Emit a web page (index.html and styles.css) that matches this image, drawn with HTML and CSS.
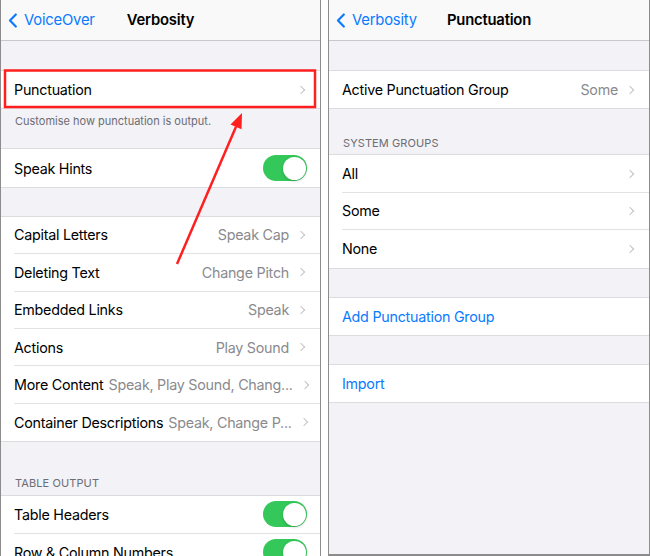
FILE: index.html
```html
<!DOCTYPE html>
<html lang="en">
<head>
  <meta charset="UTF-8">
  <title>Verbosity / Punctuation</title>
  <link rel="stylesheet" href="styles.css">
</head>
<body>

  <div class="screens">

    <div class="phone phone-left">
      <div class="navbar">
        <a class="back" href="#">
          <svg class="back-chevron" viewBox="0 0 10 16"><path d="M8 1.5 1.8 8 8 14.5"/></svg>
          VoiceOver
        </a>
        <span class="title">Verbosity</span>
      </div>

      <div class="spacer spacer-top"></div>
      <div class="group">
        <div class="row"><span class="label">Punctuation</span><span class="value"></span><i class="chev"></i></div>
      </div>
      <p class="footer">Customise how punctuation is output.</p>

      <div class="group">
        <div class="row"><span class="label">Speak Hints</span><span class="switch"></span></div>
      </div>

      <div class="spacer"></div>
      <div class="group">
        <div class="row"><span class="label">Capital Letters</span><span class="value">Speak Cap</span><i class="chev"></i></div>
        <div class="row"><span class="label">Deleting Text</span><span class="value">Change Pitch</span><i class="chev"></i></div>
        <div class="row"><span class="label">Embedded Links</span><span class="value">Speak</span><i class="chev"></i></div>
        <div class="row"><span class="label">Actions</span><span class="value">Play Sound</span><i class="chev"></i></div>
        <div class="row"><span class="label">More Content</span><span class="value">Speak, Play Sound, Chang...</span><i class="chev"></i></div>
        <div class="row"><span class="label">Container Descriptions</span><span class="value">Speak, Change P...</span><i class="chev"></i></div>
      </div>

      <p class="header header-table">Table Output</p>
      <div class="group">
        <div class="row"><span class="label">Table Headers</span><span class="switch"></span></div>
        <div class="row"><span class="label">Row &amp; Column Numbers</span><span class="switch"></span></div>
      </div>
    </div>

    <div class="phone phone-right">
      <div class="navbar">
        <a class="back" href="#">
          <svg class="back-chevron" viewBox="0 0 10 16"><path d="M8 1.5 1.8 8 8 14.5"/></svg>
          Verbosity
        </a>
        <span class="title">Punctuation</span>
      </div>

      <div class="spacer spacer-top"></div>
      <div class="group">
        <div class="row"><span class="label">Active Punctuation Group</span><span class="value">Some</span><i class="chev"></i></div>
      </div>

      <p class="header">System Groups</p>
      <div class="group">
        <div class="row"><span class="label">All</span><span class="value"></span><i class="chev"></i></div>
        <div class="row"><span class="label">Some</span><span class="value"></span><i class="chev"></i></div>
        <div class="row"><span class="label">None</span><span class="value"></span><i class="chev"></i></div>
      </div>

      <div class="spacer"></div>
      <div class="group">
        <div class="row"><span class="label link">Add Punctuation Group</span></div>
      </div>

      <div class="spacer"></div>
      <div class="group">
        <div class="row"><span class="label link">Import</span></div>
      </div>
    </div>

    <!-- annotation drawn over the left screen -->
    <svg class="callout" viewBox="0 0 321 556" width="321" height="556">
      <rect x="5" y="70.5" width="310" height="36.5" fill="none" stroke="#ff1f1f" stroke-width="2.5"/>
      <line x1="177" y1="264" x2="236" y2="126.8" stroke="#ff1f1f" stroke-width="2.5"/>
      <polygon points="242,113 241.5,129.2 230.5,124.4" fill="#ff1f1f"/>
    </svg>

  </div>

</body>
</html>
```

FILE: styles.css
```css
* {
  margin: 0;
  padding: 0;
  box-sizing: border-box;
}

html, body {
  height: 556px;
  overflow: hidden;
}

body {
  font-family: 'Inter', 'Liberation Sans', sans-serif;
  background: #fff;
  color: #000;
}

.screens {
  position: relative;
  display: flex;
  align-items: flex-start;
  gap: 7px;
  height: 556px;
  overflow: hidden;
}

.phone {
  width: 321px;
  background: #f2f2f7;
  border-left: 1px solid #8c8c8c;
  border-right: 1px solid #8c8c8c;
}

.phone-left {
  flex-shrink: 0;
}

.phone-right {
  width: 322px;
  height: 556px;
  border-bottom: 2px solid #8c8c8c;
}

/* nav bar */
.navbar {
  height: 41px;
  background: #f9f9f9;
  border-bottom: 1px solid #c9c9cc;
  display: grid;
  grid-template-columns: 1fr auto 1fr;
  align-items: center;
}

.back {
  display: flex;
  align-items: center;
  gap: 6px;
  padding-left: 7px;
  color: #0a7aff;
  text-decoration: none;
  font-size: 14.8px;
  letter-spacing: -0.2px;
}

.back-chevron {
  width: 10px;
  height: 15px;
  fill: none;
  stroke: #0a7aff;
  stroke-width: 2.3;
  stroke-linecap: round;
  stroke-linejoin: round;
}

.title {
  font-size: 14.8px;
  font-weight: 600;
  letter-spacing: -0.2px;
}

/* grouped list */
.spacer {
  height: 28px;
}

.spacer-top {
  height: 29px;
}

.group {
  background: #fff;
  border-top: 1px solid #dcdce0;
  border-bottom: 1px solid #dcdce0;
}

.row {
  height: 37.4px;
  margin-left: 13px;
  padding-right: 13px;
  display: flex;
  align-items: center;
  border-bottom: 1px solid #e2e2e5;
  font-size: 14.3px;
  letter-spacing: -0.25px;
  white-space: nowrap;
}

.row:last-child {
  border-bottom: none;
}

.label.link {
  color: #0a7aff;
}

.value {
  margin-left: auto;
  padding-left: 5px;
  color: #8a8a8e;
}

.chev {
  width: 6px;
  height: 6px;
  flex-shrink: 0;
  margin: 0 3px 0 9px;
  border-top: 1.5px solid #c4c4c7;
  border-right: 1.5px solid #c4c4c7;
  transform: rotate(45deg);
}

.switch {
  margin-left: auto;
  width: 44px;
  height: 26px;
  border-radius: 13px;
  background: #34c759;
  position: relative;
}

.switch::after {
  content: "";
  position: absolute;
  right: 1.5px;
  top: 1.5px;
  width: 23px;
  height: 23px;
  border-radius: 50%;
  background: #fff;
  box-shadow: 0 1px 3px rgba(0, 0, 0, 0.2);
}

.footer {
  padding: 6px 14px 20px;
  font-size: 11px;
  line-height: 13px;
  color: #6d6d72;
}

.header {
  padding: 28px 14px 4px;
  font-size: 11px;
  line-height: 13px;
  color: #6d6d72;
  text-transform: uppercase;
  letter-spacing: 0.1px;
}

.header-table {
  padding-top: 35px;
  padding-bottom: 5px;
}

.callout {
  position: absolute;
  left: 0;
  top: 0;
  pointer-events: none;
}
```
